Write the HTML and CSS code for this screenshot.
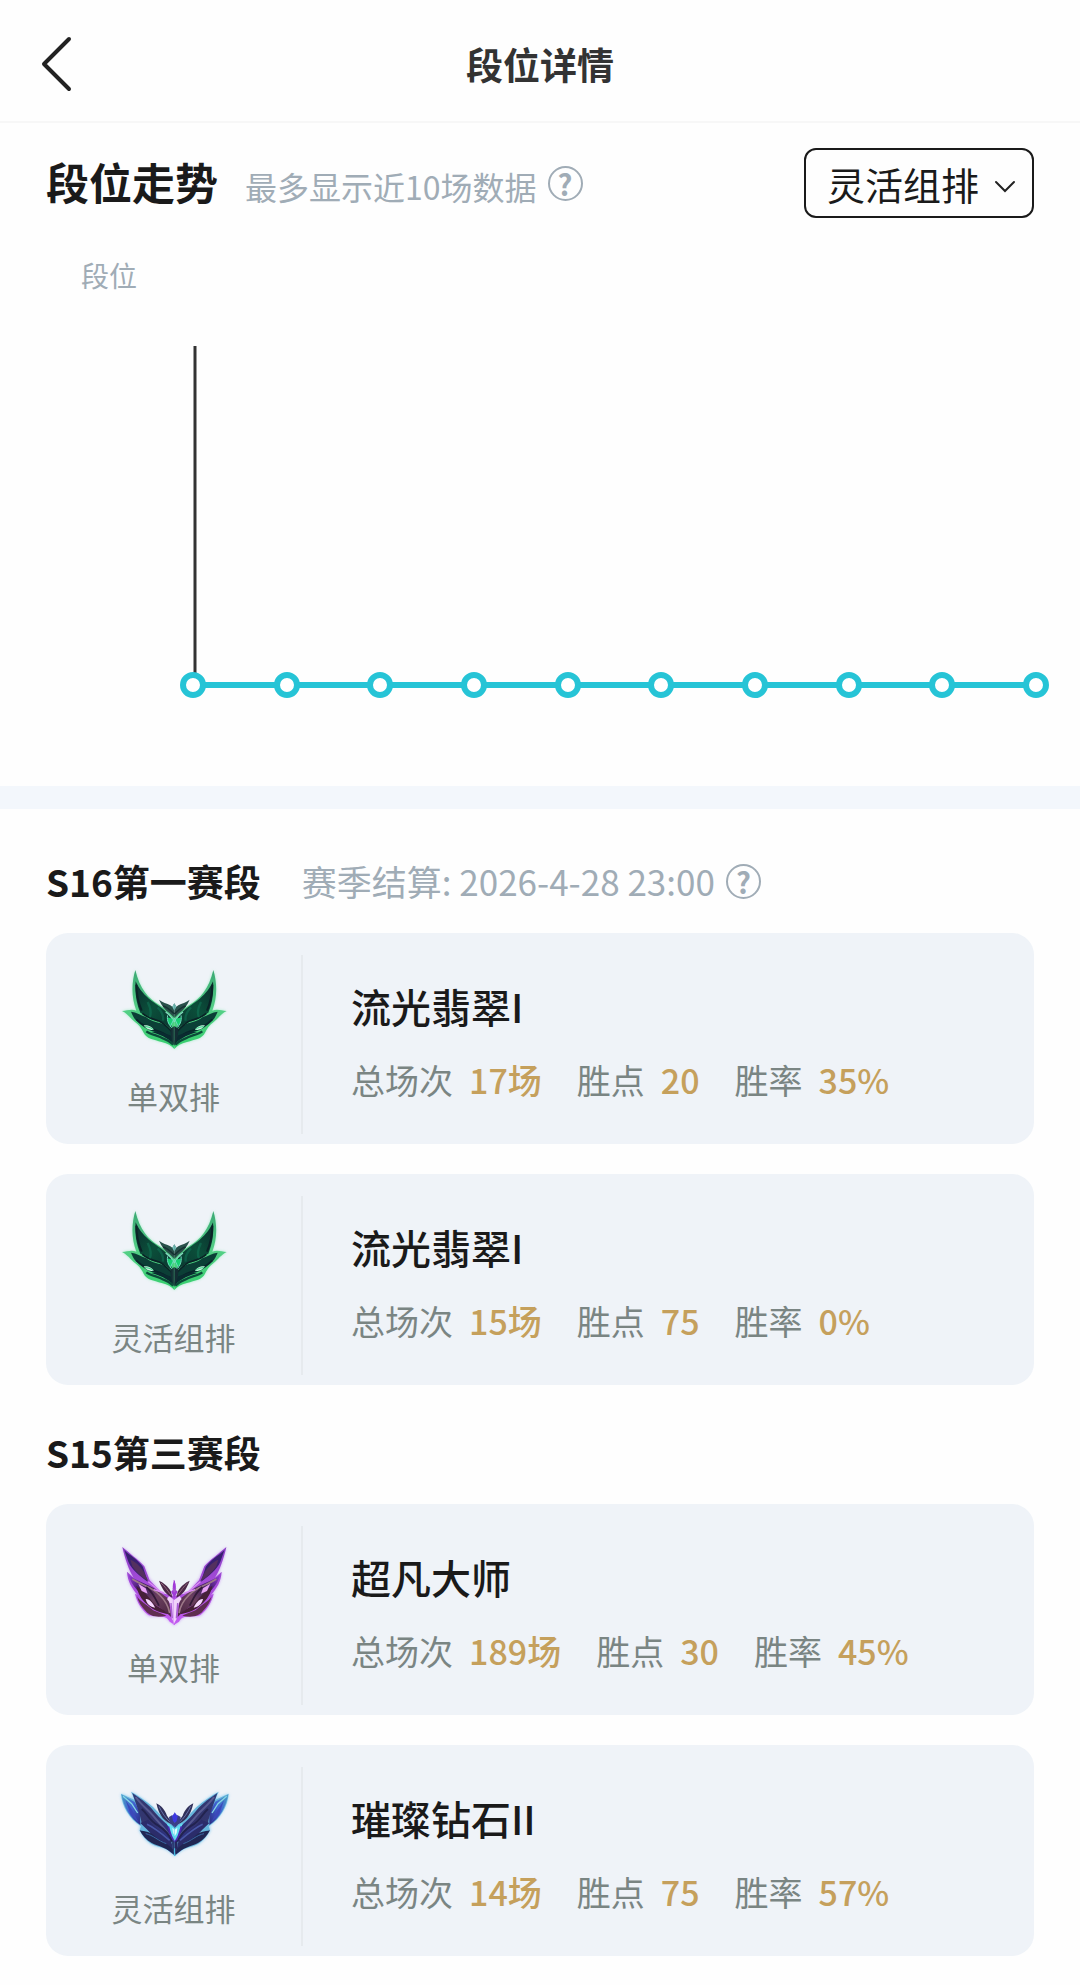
FILE: index.html
```html
<!DOCTYPE html>
<html lang="zh-CN">
<head>
    <meta charset="UTF-8">
    <meta name="viewport" content="width=device-width, initial-scale=1.0">
    <title>段位详情</title>
    <link rel="stylesheet" href="styles.css">
</head>
<body>

<!-- Emblem artwork, left half is mirrored for the right half -->
<svg class="defs" width="0" height="0" aria-hidden="true">
    <defs>
        <linearGradient id="emeraldDark" x1="0" y1="0" x2="1" y2="1">
            <stop offset="0" stop-color="#0a2c2c"/>
            <stop offset="0.5" stop-color="#0b4f3a"/>
            <stop offset="1" stop-color="#0a3630"/>
        </linearGradient>
        <linearGradient id="emeraldEdge" x1="0" y1="0" x2="0" y2="1">
            <stop offset="0" stop-color="#3aa873"/>
            <stop offset="0.5" stop-color="#54cf86"/>
            <stop offset="1" stop-color="#35cf6d"/>
        </linearGradient>
        <linearGradient id="masterWing" x1="0" y1="0" x2="1" y2="1">
            <stop offset="0" stop-color="#9a3fe0"/>
            <stop offset="0.3" stop-color="#3f1d66"/>
            <stop offset="0.6" stop-color="#6a3f5e"/>
            <stop offset="1" stop-color="#4a2440"/>
        </linearGradient>
        <linearGradient id="masterEdge" x1="0" y1="0" x2="0" y2="1">
            <stop offset="0" stop-color="#8a3fc4"/>
            <stop offset="1" stop-color="#c45cf2"/>
        </linearGradient>
        <linearGradient id="diamondWing" x1="0" y1="0" x2="1" y2="1">
            <stop offset="0" stop-color="#2f3a78"/>
            <stop offset="0.5" stop-color="#34356c"/>
            <stop offset="1" stop-color="#2a2f86"/>
        </linearGradient>
        <linearGradient id="diamondTip" x1="0" y1="0" x2="1" y2="1">
            <stop offset="0" stop-color="#4a9cc4"/>
            <stop offset="0.5" stop-color="#3f5fd0"/>
            <stop offset="1" stop-color="#2a2a80"/>
        </linearGradient>
        <filter id="glow" x="-20%" y="-20%" width="140%" height="140%">
            <feGaussianBlur stdDeviation="4"/>
        </filter>

        <g id="emeraldHalf">
            <path d="M79 60C68 96 66 140 82 182C68 176 54 182 39 183C54 190 66 206 78 216C90 224 98 236 104 248C112 266 134 268 158 276C176 281 188 287 196 297V196L150 164C118 146 92 116 79 60Z" fill="#5fe39a" opacity="0.5" filter="url(#glow)"/>
            <path d="M79 60C68 96 66 140 82 182C68 176 54 182 39 183C54 190 66 206 78 216C90 224 98 236 104 248C112 266 134 268 158 276C176 281 188 287 196 297V196L150 164C118 146 92 116 79 60Z" fill="url(#emeraldEdge)"/>
            <path d="M80 94C77 128 82 160 94 188C112 196 124 212 144 212C164 216 176 228 189 240L186 202C170 178 142 164 120 146C100 130 88 112 80 94Z" fill="url(#emeraldDark)"/>
            <path d="M66 185C82 186 96 196 112 202C130 218 152 216 168 226L190 248V266C172 256 160 246 138 246C116 242 96 226 80 210C74 204 70 194 66 185Z" fill="#0b3f36"/>
            <path d="M100 190C116 204 134 208 150 213C166 220 178 234 190 247" fill="none" stroke="#0a2226" stroke-width="5"/>
            <path d="M82 208C102 228 126 238 150 244C168 250 182 262 192 272" fill="none" stroke="#09252a" stroke-width="5"/>
            <path d="M126 246C148 252 176 262 195 284V272L184 256L152 245Z" fill="#0a2b30"/>
            <path d="M112 244C126 254 148 256 164 266C176 270 186 278 193 284" fill="none" stroke="#0b4a38" stroke-width="7"/>
            <path d="M104 226C116 224 130 230 134 239C122 242 112 238 104 226Z" fill="#c4f5dc"/>
            <path d="M108 230C116 230 124 232 132 238" fill="none" stroke="#35d184" stroke-width="3"/>
            <path d="M82 104C82 134 88 158 98 182" fill="none" stroke="#0a2226" stroke-width="6"/>
            <path d="M116 156C124 172 128 190 122 202M146 172C158 184 164 200 162 212" fill="none" stroke="#11795a" stroke-width="7" opacity="0.5"/>
            <path d="M150 149C160 158 174 160 184 166L190 170L196 160V204L182 190C168 180 158 168 150 149Z" fill="#29504a"/>
            <path d="M162 168C174 170 184 180 196 192" fill="none" stroke="#163232" stroke-width="5"/>
            <path d="M170 186C182 194 190 204 196 216" fill="none" stroke="#83d9c0" stroke-width="4"/>
            <path d="M176 202L190 206L193 216L186 228L177 220Z" fill="#18cf72"/>
            <path d="M176 196C172 214 182 230 196 240M196 204L184 230" fill="none" stroke="#72dbc0" stroke-width="3"/>
            <path d="M184 236L196 228V288C188 272 184 254 184 236Z" fill="#142c33"/>
            <path d="M196 160L190 170L196 182Z" fill="#75c3bd"/>
        </g>

        <g id="masterHalf">
            <path d="M38 48C46 84 58 118 72 148L52 122C54 152 66 170 80 188L76 188C82 214 96 236 116 254C138 262 164 248 178 270L196 282V196L154 184L118 142L104 106C86 86 58 66 38 48Z" fill="#b766f0" opacity="0.6" filter="url(#glow)"/>
            <path d="M38 48C46 84 58 118 72 140L52 122C54 152 66 170 84 192L76 188C82 214 96 236 116 252C138 262 166 246 180 272L196 282V196L156 186L120 148L104 106C86 86 58 66 38 48Z" fill="url(#masterEdge)"/>
            <path d="M44 58C62 74 86 88 100 108L114 152C92 136 66 116 56 92Z" fill="#392070"/>
            <path d="M62 86C78 92 92 106 102 122L116 150C98 142 78 122 68 106Z" fill="#54305f"/>
            <path d="M56 130C78 152 112 156 142 178L178 204L184 258C160 232 140 226 118 208C92 188 66 168 56 130Z" fill="url(#masterWing)"/>
            <path d="M80 164C98 178 116 194 128 212C142 230 162 232 178 250C154 246 132 240 112 220C96 206 84 186 80 164Z" fill="#462038"/>
            <path d="M82 196C92 212 112 222 126 234C138 244 156 246 170 254C146 260 122 258 108 240C96 228 86 214 82 196Z" fill="#5f2d50"/>
            <path d="M68 144C94 162 126 166 150 192C166 208 176 222 180 246" fill="none" stroke="#9c7887" stroke-width="5"/>
            <path d="M110 168C130 184 138 204 148 224" fill="none" stroke="#321a38" stroke-width="5"/>
            <path d="M86 158L108 172L114 188L96 180Z" fill="#e7a1f4"/>
            <path d="M108 204C118 202 130 216 136 230C122 228 112 220 108 204Z" fill="#f6d8ff"/>
            <path d="M132 176L164 186M116 152L150 180" fill="none" stroke="#da8df3" stroke-width="4"/>
            <path d="M148 149C160 154 174 164 184 182L188 200C170 192 158 176 148 149Z" fill="#4b2848"/>
            <path d="M154 156C166 166 174 180 184 192" fill="none" stroke="#8e6579" stroke-width="3"/>
            <path d="M196 146C190 154 188 164 190 176L184 182L196 204Z" fill="#a13bd8"/>
            <path d="M178 196L196 208V280L186 262C188 238 184 218 172 204Z" fill="#f0d3fa"/>
            <path d="M184 216L188 262M190 172L194 184" fill="none" stroke="#a75ed0" stroke-width="4"/>
        </g>

        <g id="diamondHalf">
            <path d="M34 68C38 102 56 136 92 164L88 178C104 204 118 222 148 228C172 234 184 244 196 256V166L172 152L132 112C110 90 86 74 64 62L74 84Z" fill="#4fb4ea" opacity="0.6" filter="url(#glow)"/>
            <path d="M34 68C38 106 56 140 94 166L90 178C104 206 122 222 150 228C174 234 184 244 196 256V166L172 152L130 108C110 90 86 74 64 62L76 88Z" fill="#66b5dc"/>
            <path d="M36 71L74 92L92 124L92 162C62 142 42 108 36 71Z" fill="url(#diamondTip)"/>
            <path d="M48 88L68 118L86 154L62 128Z" fill="#3c48bb"/>
            <path d="M40 76L66 98L84 126" fill="none" stroke="#84d7e4" stroke-width="4"/>
            <path d="M68 66C92 82 110 96 124 110C138 128 156 146 174 162L190 214C168 200 144 186 120 180L96 158C92 128 76 94 68 66Z" fill="url(#diamondWing)"/>
            <path d="M78 78C96 104 116 116 132 136C148 156 168 174 182 198" fill="none" stroke="#575a91" stroke-width="6"/>
            <path d="M96 114C114 128 118 150 146 164C166 176 178 190 188 212" fill="none" stroke="#22234f" stroke-width="6"/>
            <path d="M92 156L116 146L132 164L184 208L194 252C166 230 148 218 128 194C118 180 106 170 92 156Z" fill="#2b2c6a"/>
            <path d="M112 160C134 170 156 188 180 208" fill="none" stroke="#4857a7" stroke-width="5"/>
            <path d="M90 178C106 182 124 182 138 198C156 212 176 218 190 236L194 250C172 230 146 226 126 216C110 208 98 194 90 178Z" fill="#202653"/>
            <path d="M108 188C130 192 146 210 170 218" fill="none" stroke="#3a67a4" stroke-width="3"/>
            <path d="M140 97C154 104 166 116 172 134L192 162C166 154 148 136 140 97Z" fill="#30305a"/>
            <path d="M148 106C156 124 168 142 184 156" fill="none" stroke="#6872a8" stroke-width="3"/>
            <path d="M178 138L188 132L196 156V172L180 154Z" fill="#3a3f86"/>
            <path d="M196 124L187 136L190 150L196 156Z" fill="#3d39df"/>
            <path d="M174 156L196 172V208L186 192C184 178 178 168 172 160Z" fill="#61dcf0"/>
            <path d="M188 170L196 176V196L190 186Z" fill="#e2ffff"/>
            <path d="M176 166C180 184 184 200 196 214" fill="none" stroke="#4a25ae" stroke-width="5"/>
            <path d="M188 206L196 214V254C188 238 186 222 188 206Z" fill="#26265f"/>
            <path d="M196 232V254" fill="none" stroke="#48c5e9" stroke-width="3"/>
        </g>

        <symbol id="emerald" viewBox="0 0 390 330">
            <use href="#emeraldHalf"/>
            <use href="#emeraldHalf" transform="translate(392 0) scale(-1 1)"/>
        </symbol>
        <symbol id="master" viewBox="-2 -30 390 330">
            <use href="#masterHalf"/>
            <use href="#masterHalf" transform="translate(388 0) scale(-1 1)"/>
        </symbol>
        <symbol id="diamond" viewBox="-2 -27 390 330">
            <use href="#diamondHalf"/>
            <use href="#diamondHalf" transform="translate(391 0) scale(-1 1)"/>
        </symbol>
    </defs>
</svg>

<header class="header">
    <button type="button" class="back" aria-label="返回">
        <svg width="32" height="56" viewBox="0 0 32 56"><path d="M29 3L4 28L29 53" fill="none" stroke="#222" stroke-width="4" stroke-linecap="round" stroke-linejoin="round"/></svg>
    </button>
    <h1 class="header-title">段位详情</h1>
</header>

<main>
    <!-- Rank trend -->
    <section class="trend">
        <div class="trend-head">
            <div class="trend-text">
                <h2 class="trend-title">段位走势</h2>
                <span class="trend-note">最多显示近10场数据</span>
            </div>
            <button type="button" class="help" aria-label="走势说明">?</button>
            <div class="queue">
                <select class="queue-select" aria-label="排位类型">
                    <option>单双排</option>
                    <option selected>灵活组排</option>
                </select>
                <svg class="queue-arrow" width="22" height="14" viewBox="0 0 22 14"><path d="M2 2L11 11L20 2" fill="none" stroke="#222" stroke-width="2" stroke-linecap="round"/></svg>
            </div>
        </div>
        <p class="axis-name">段位</p>
        <svg class="chart" viewBox="0 0 1080 366" role="img" aria-label="段位走势图">
            <path d="M195 6V340" stroke="#333" stroke-width="3"/>
            <path d="M193 345H1036" stroke="#26c4d6" stroke-width="6"/>
            <g fill="#fff" stroke="#26c4d6" stroke-width="6">
                <circle cx="193" cy="345" r="10"/>
                <circle cx="287" cy="345" r="10"/>
                <circle cx="380" cy="345" r="10"/>
                <circle cx="474" cy="345" r="10"/>
                <circle cx="568" cy="345" r="10"/>
                <circle cx="661" cy="345" r="10"/>
                <circle cx="755" cy="345" r="10"/>
                <circle cx="849" cy="345" r="10"/>
                <circle cx="942" cy="345" r="10"/>
                <circle cx="1036" cy="345" r="10"/>
            </g>
        </svg>
    </section>

    <!-- Seasons -->
    <section class="season">
        <div class="season-head">
            <h2 class="season-title">S16第一赛段</h2>
            <span class="season-note">赛季结算: 2026-4-28 23:00</span>
            <button type="button" class="help" aria-label="赛季结算说明">?</button>
        </div>
        <article class="card">
            <div class="card-queue">
                <svg class="emblem"><use href="#emerald"/></svg>
                <span>单双排</span>
            </div>
            <div class="card-info">
                <h3 class="rank">流光翡翠I</h3>
                <dl class="stats">
                    <div class="stat"><dt>总场次</dt><dd>17场</dd></div>
                    <div class="stat"><dt>胜点</dt><dd>20</dd></div>
                    <div class="stat"><dt>胜率</dt><dd>35%</dd></div>
                </dl>
            </div>
        </article>
        <article class="card">
            <div class="card-queue">
                <svg class="emblem"><use href="#emerald"/></svg>
                <span>灵活组排</span>
            </div>
            <div class="card-info">
                <h3 class="rank">流光翡翠I</h3>
                <dl class="stats">
                    <div class="stat"><dt>总场次</dt><dd>15场</dd></div>
                    <div class="stat"><dt>胜点</dt><dd>75</dd></div>
                    <div class="stat"><dt>胜率</dt><dd>0%</dd></div>
                </dl>
            </div>
        </article>
    </section>

    <section class="season">
        <div class="season-head">
            <h2 class="season-title">S15第三赛段</h2>
        </div>
        <article class="card">
            <div class="card-queue">
                <svg class="emblem"><use href="#master"/></svg>
                <span>单双排</span>
            </div>
            <div class="card-info">
                <h3 class="rank">超凡大师</h3>
                <dl class="stats">
                    <div class="stat"><dt>总场次</dt><dd>189场</dd></div>
                    <div class="stat"><dt>胜点</dt><dd>30</dd></div>
                    <div class="stat"><dt>胜率</dt><dd>45%</dd></div>
                </dl>
            </div>
        </article>
        <article class="card">
            <div class="card-queue">
                <svg class="emblem"><use href="#diamond"/></svg>
                <span>灵活组排</span>
            </div>
            <div class="card-info">
                <h3 class="rank">璀璨钻石II</h3>
                <dl class="stats">
                    <div class="stat"><dt>总场次</dt><dd>14场</dd></div>
                    <div class="stat"><dt>胜点</dt><dd>75</dd></div>
                    <div class="stat"><dt>胜率</dt><dd>57%</dd></div>
                </dl>
            </div>
        </article>
    </section>
</main>

</body>
</html>
```
FILE: styles.css
```css
* {
    box-sizing: border-box;
    margin: 0;
    padding: 0;
}

body {
    background-color: #fefefe;
    color: #1a1a1a;
    font-family: "Noto Sans CJK SC", sans-serif;
    font-size: 34px;
}

button, select {
    font-family: inherit;
    background: none;
    cursor: pointer;
}

.defs {
    position: absolute;
}

/* Header */
.header {
    display: grid;
    grid-template-columns: 1fr auto 1fr;
    align-items: center;
    height: 123px;
    padding: 6px 40px 0;
    border-bottom: 2px solid #f7f7f7;
}

.back {
    justify-self: start;
    display: flex;
    border: none;
}

.header-title {
    color: #333;
    font-size: 37px;
    font-weight: 700;
}

/* Trend */
.trend {
    padding-bottom: 80px;
    border-bottom: 23px solid #f3f7fc;
}

.trend-head {
    display: flex;
    align-items: center;
    padding: 25px 46px 0;
}

.trend-text {
    display: flex;
    align-items: baseline;
    line-height: 64px;
}

.trend-title {
    margin-right: 27px;
    font-size: 43px;
    font-weight: 700;
}

.trend-note {
    color: #a0acb6;
    font-size: 32px;
}

.help {
    display: flex;
    align-items: center;
    justify-content: center;
    width: 35px;
    height: 35px;
    margin-left: 11px;
    border: 2px solid #a0acb6;
    border-radius: 50%;
    color: #a0acb6;
    font-size: 29px;
    font-weight: 700;
    line-height: 30px;
}

.queue {
    position: relative;
    margin-left: auto;
}

.queue-select {
    appearance: none;
    display: block;
    height: 70px;
    padding: 0 52px 0 21px;
    border: 2px solid #1a1a1a;
    border-radius: 12px;
    color: #1a1a1a;
    font-size: 38px;
}

.queue-arrow {
    position: absolute;
    top: 32px;
    right: 18px;
    pointer-events: none;
}

.axis-name {
    margin: 35px 0 43px 81px;
    color: #a0acb6;
    font-size: 28px;
    line-height: 44px;
}

.chart {
    display: block;
    width: 100%;
}

/* Season cards */
.season {
    padding: 45px 46px 0;
}

.season + .season {
    padding-top: 40px;
}

.season-head {
    display: flex;
    align-items: center;
    margin-bottom: 25px;
    line-height: 54px;
}

.season-title {
    margin-right: 41px;
    font-size: 37px;
    font-weight: 700;
}

.season-note {
    color: #a0acb6;
    font-size: 35px;
}

.card {
    display: flex;
    min-height: 211px;
    border-radius: 22px;
    background-color: #eff3f8;
}

.card + .card {
    margin-top: 30px;
}

.card-queue {
    display: flex;
    flex-direction: column;
    align-items: center;
    width: 255px;
    padding-top: 17px;
    color: #7a8583;
    font-size: 31px;
    line-height: 40px;
}

.emblem {
    width: 130px;
    height: 110px;
    margin-bottom: 16px;
}

.card-info {
    flex: 1;
    margin: 22px 0 10px;
    padding: 26px 0 0 48px;
    border-left: 2px solid #e6eaee;
}

.rank {
    margin-bottom: 29px;
    font-size: 40px;
    font-weight: 500;
    line-height: 50px;
}

.stats {
    display: flex;
    gap: 35px;
    line-height: 40px;
}

.stat {
    display: flex;
    gap: 16px;
}

.stat dt {
    color: #7a8583;
}

.stat dd {
    color: #c5a05c;
    font-weight: 500;
}
```
